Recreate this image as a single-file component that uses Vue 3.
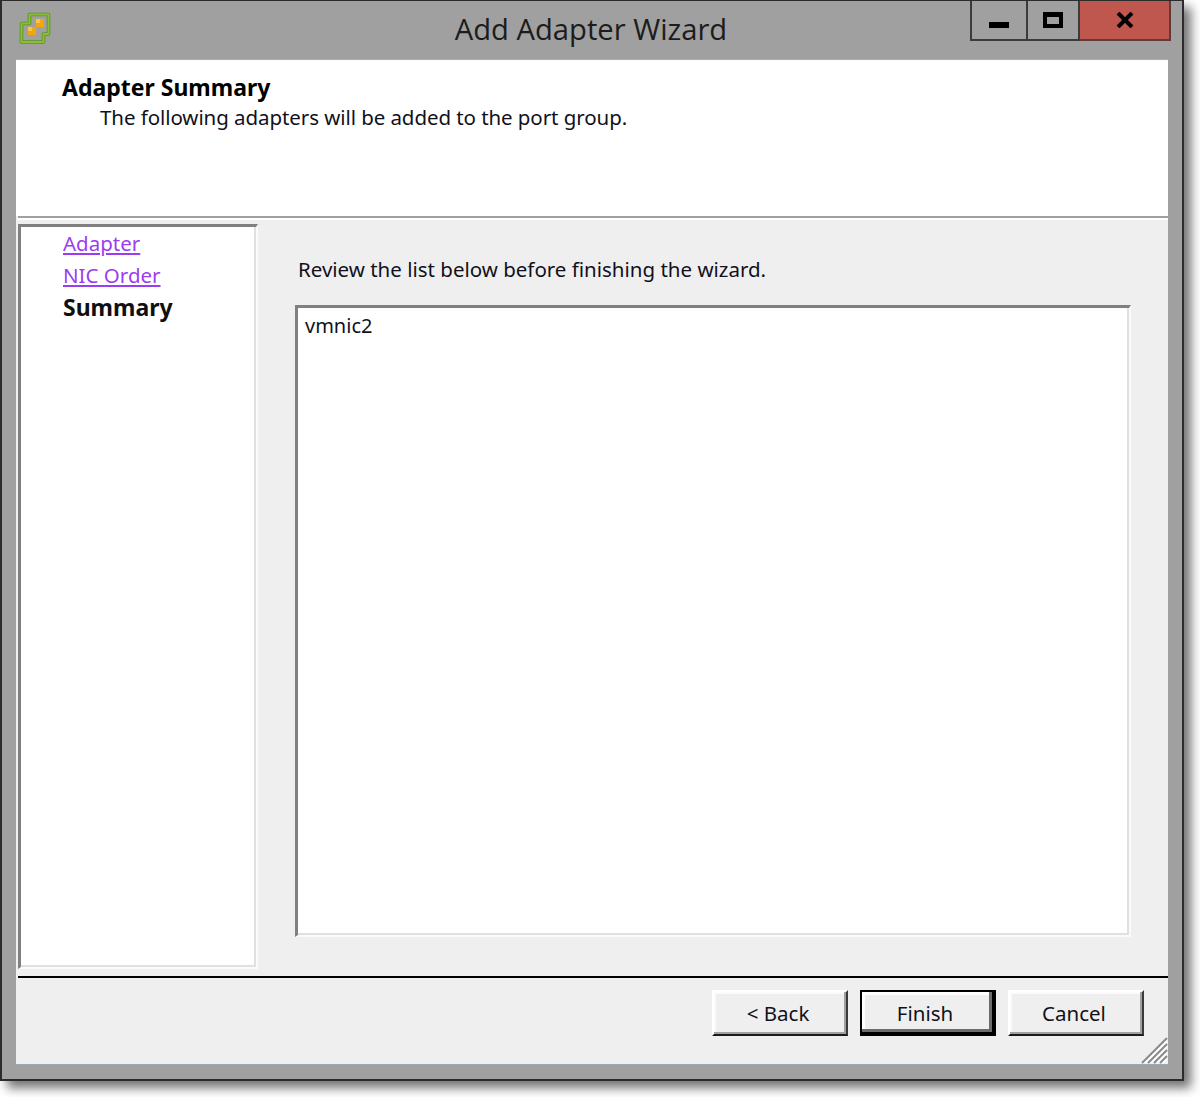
<script setup>
const steps = [
  { label: 'Adapter', link: true },
  { label: 'NIC Order', link: true },
  { label: 'Summary', link: false }
]
const buttons = [
  { label: '< Back', primary: false },
  { label: 'Finish', primary: true },
  { label: 'Cancel', primary: false }
]
</script>

<template>
  <div class="page">
    <div class="window">
      <header class="titlebar">
        <div class="title-left">
          <svg class="logo" width="34" height="34" viewBox="0 0 34 34" aria-hidden="true">
            <path d="M10.5 3.5H29.5V23H24.5V31H2.5V12.5H10.5Z" fill="#a0a09c" stroke="#5f8f24" stroke-width="3.6" stroke-linejoin="round"/>
            <path d="M10.5 3.5H29.5V23H24.5V31H2.5V12.5H10.5Z" fill="none" stroke="#86c034" stroke-width="2" stroke-linejoin="round"/>
            <rect x="17" y="8" width="8" height="8" fill="#f2a60f"/>
            <rect x="17" y="8" width="4" height="4" fill="#fcc444"/>
            <rect x="9" y="16" width="8" height="8" fill="#f2a60f"/>
            <rect x="9" y="16" width="4" height="4" fill="#fcc444"/>
          </svg>
        </div>
        <h1 class="title">Add Adapter Wizard</h1>
        <div class="controls">
          <div class="ctl ctl-min"><span class="min-glyph"></span></div>
          <div class="ctl ctl-max"><span class="max-glyph"></span></div>
          <div class="ctl ctl-close">
            <svg width="18" height="16" viewBox="0 0 18 16" aria-hidden="true">
              <path d="M2 1 L16 15 M16 1 L2 15" stroke="#000" stroke-width="4" fill="none"/>
            </svg>
          </div>
        </div>
      </header>

      <main class="client">
        <section class="banner">
          <div class="banner-title">Adapter Summary</div>
          <div class="banner-sub">The following adapters will be added to the port group.</div>
        </section>
        <div class="rule-top"></div>

        <div class="middle">
          <nav class="sidebar">
            <template v-for="s in steps" :key="s.label">
              <a v-if="s.link" class="step step-link">{{ s.label }}</a>
              <span v-else class="step step-current">{{ s.label }}</span>
            </template>
          </nav>
          <section class="panel">
            <p class="intro">Review the list below before finishing the wizard.</p>
            <div class="listbox">vmnic2</div>
          </section>
        </div>

        <div class="rule-bottom"></div>

        <footer class="footer">
          <button
            v-for="b in buttons"
            :key="b.label"
            class="btn"
            :class="{ 'btn-primary': b.primary }"
            type="button"
          ><span class="btn-label">{{ b.label }}</span></button>
        </footer>

        <svg class="grip" width="28" height="28" viewBox="0 0 28 28" aria-hidden="true">
          <path d="M2 27 L27 2 M8 27 L27 8 M14 27 L27 14 M20 27 L27 20" stroke="#8a8a8a" stroke-width="2" fill="none"/>
          <path d="M5 27 L27 5 M11 27 L27 11 M17 27 L27 17 M23 27 L27 23" stroke="#fff" stroke-width="1.6" fill="none"/>
        </svg>
      </main>
    </div>
  </div>
</template>

<style>
html, body { margin: 0; background: #fff; }
</style>

<style scoped>
.page {
  width: 1200px;
  height: 1097px;
  overflow: hidden;
  background: #fff;
  font-family: "Noto Sans", "DejaVu Sans", sans-serif;
  color: #11111c;
}
.window {
  box-sizing: border-box;
  width: 1184px;
  height: 1081px;
  background: #a0a0a0;
  border: 2px solid #2b2b2b;
  border-top-width: 1px;
  padding: 0 14px 14px;
  display: flex;
  flex-direction: column;
  box-shadow: 7px 7px 10px rgba(0, 0, 0, 0.55);
}
.titlebar {
  height: 58px;
  flex: none;
  display: grid;
  grid-template-columns: 1fr auto 1fr;
  align-items: start;
}
.title-left { padding: 10px 0 0 3px; }
.logo { display: block; }
.title {
  margin: 8px 0 0;
  font-family: "Open Sans", "Noto Sans", sans-serif;
  font-size: 29.2px;
  line-height: 40px;
  font-weight: 400;
  color: #1c1c1c;
  white-space: nowrap;
  transform: translateX(-1px);
}
.controls {
  justify-self: end;
  display: flex;
  height: 40px;
  margin-right: -3px;
  box-sizing: border-box;
  border: 2px solid #3b3b3b;
  border-top: none;
}
.ctl {
  display: flex;
  align-items: center;
  justify-content: center;
  box-sizing: border-box;
}
.ctl-min { width: 56px; border-right: 2px solid #3b3b3b; }
.ctl-max { width: 52px; border-right: 2px solid #3b3b3b; }
.ctl-close {
  width: 89px;
  background: #c0574e;
  box-shadow: 0 2px 0 #5c3b38, 2px 0 0 #5c3b38, 2px 2px 0 #5c3b38;
}
.min-glyph {
  width: 20px;
  height: 6px;
  background: #000;
  margin-top: 10px;
}
.max-glyph {
  box-sizing: border-box;
  width: 20px;
  height: 16px;
  border: 4px solid #000;
  border-top-width: 5px;
}

.client {
  position: relative;
  flex: 1;
  display: flex;
  flex-direction: column;
  background: #efefef;
  border-top: 1px solid #9fb0c4;
  border-bottom: 1px solid #9ea6b4;
  min-height: 0;
}
.banner {
  height: 156px;
  flex: none;
  box-sizing: border-box;
  background: #fff;
  padding: 12px 0 0 46px;
  font-size: 20.5px;
  line-height: 30px;
}
.banner-title { font-weight: 700; font-size: 23px; color: #000; white-space: nowrap; }
.banner-sub { padding-left: 38px; white-space: nowrap; letter-spacing: -0.07px; }
.rule-top {
  flex: none;
  height: 2px;
  margin-left: 2px;
  background: #a0a0a0;
  border-bottom: 2px solid #fff;
}
.middle {
  flex: 1;
  display: flex;
  min-height: 0;
  padding: 4px 0 7px 2px;
}
.sidebar {
  width: 240px;
  flex: none;
  box-sizing: border-box;
  display: flex;
  flex-direction: column;
  align-items: flex-start;
  background: #fff;
  border-style: solid;
  border-color: #808080 #fafafa #fafafa #808080;
  border-width: 3px 2px 2px 3px;
  box-shadow: inset -2px -2px 0 #e0e0e0;
  padding: 0 0 0 42px;
}
.step {
  font-size: 20.5px;
  line-height: 32px;
  white-space: nowrap;
}
.step-link { color: #9a3df0; text-decoration: underline; text-underline-offset: 2px; }
.step-current { font-weight: 700; font-size: 23px; color: #101010; }
.panel {
  flex: 1;
  min-width: 0;
  padding: 30px 37px 32px 37px;
  display: flex;
  flex-direction: column;
}
.intro {
  margin: 0 0 21px 3px;
  font-size: 20.5px;
  line-height: 30px;
  white-space: nowrap;
}
.listbox {
  flex: 1;
  box-sizing: border-box;
  background: #fff;
  border-style: solid;
  border-color: #808080 #fafafa #fafafa #808080;
  border-width: 3px 2px 2px 3px;
  box-shadow: inset -2px -2px 0 #e0e0e0;
  padding: 2px 0 0 7px;
  font-size: 20px;
  line-height: 32px;
}
.rule-bottom {
  flex: none;
  height: 2px;
  margin-left: 2px;
  background: #000;
}
.footer {
  flex: none;
  height: 86px;
  box-sizing: border-box;
  display: flex;
  justify-content: flex-end;
  gap: 12px;
  padding: 12px 24px 0 0;
}
.btn {
  width: 136px;
  height: 46px;
  box-sizing: border-box;
  background: #efefef;
  border-style: solid;
  border-width: 2px;
  border-color: #fff #3a3a3a #1a1a1a #fff;
  padding: 0 4px 0 0;
  font: inherit;
  font-size: 20.5px;
  color: #11111c;
  box-shadow: inset -2px -2px 0 #a0a0a0, inset 2px 2px 0 #fbfbfb;
}
.btn-primary {
  border: 2px solid #000;
  border-bottom-width: 4px;
  border-right-width: 4px;
  padding: 2px 4px 0 0;
  box-shadow: inset -3px -3px 0 #6c6c6c, inset 3px 3px 0 #fff;
}
.btn-label { display: inline-block; }
.grip {
  position: absolute;
  right: 0;
  bottom: 0;
}
</style>
